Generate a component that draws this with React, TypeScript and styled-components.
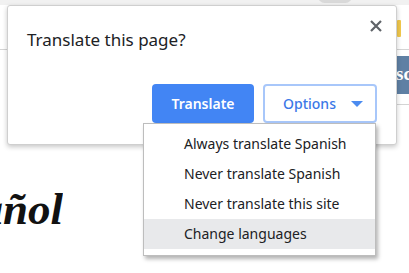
import React from "react";
import styled, { createGlobalStyle } from "styled-components";

const GlobalStyle = createGlobalStyle`
  html, body {
    margin: 0;
    padding: 0;
    background: #ffffff;
  }
  #root {
    width: 409px;
    height: 273px;
  }
`;

const uiFont = `"Noto Sans", "Open Sans", Arial, sans-serif`;

const menuItems = [
  "Always translate Spanish",
  "Never translate Spanish",
  "Never translate this site",
  "Change languages",
];

const App: React.FC = () => {
  return (
    <>
      <GlobalStyle />
      <Page>
        <TopStrip>
          <Pill />
        </TopStrip>
        <HeaderRow>
          <YellowTab />
        </HeaderRow>
        <NavRow>
          <NavTab>
            <NavButton>sc</NavButton>
          </NavTab>
        </NavRow>
        <HeadingClip>
          <Heading>Español</Heading>
        </HeadingClip>

        <Bubble>
          <CloseButton aria-label="Close">
            <svg width="12" height="12" viewBox="0 0 12 12">
              <path
                d="M1 1 L11 11 M11 1 L1 11"
                stroke="#5f6368"
                strokeWidth="2.2"
                strokeLinecap="butt"
              />
            </svg>
          </CloseButton>
          <Title>Translate this page?</Title>
          <ButtonRow>
            <PrimaryButton>Translate</PrimaryButton>
            <OptionsButton>
              Options
              <Caret />
            </OptionsButton>
          </ButtonRow>
        </Bubble>

        <Menu>
          {menuItems.map((label, i) => (
            <MenuItem key={label} $active={i === menuItems.length - 1}>
              {label}
            </MenuItem>
          ))}
        </Menu>
      </Page>
    </>
  );
};

const Page = styled.div`
  position: relative;
  width: 409px;
  height: 273px;
  overflow: hidden;
  background: #ffffff;
  display: flex;
  flex-direction: column;
  font-family: ${uiFont};
`;

const TopStrip = styled.div`
  height: 5px;
  background: #f1f1f1;
  display: flex;
  flex-shrink: 0;
`;

const Pill = styled.div`
  margin-left: 318px;
  margin-top: -10px;
  width: 34px;
  height: 13px;
  border-radius: 7px;
  background: #d9d9d9;
`;

const HeaderRow = styled.div`
  height: 45px;
  flex-shrink: 0;
  border-bottom: 1px solid #d4d4d4;
  display: flex;
  justify-content: flex-end;
  padding-right: 8px;
  padding-top: 15px;
  box-sizing: border-box;
`;

const YellowTab = styled.div`
  width: 4px;
  height: 17px;
  background: #f2c94c;
  border-radius: 1px;
`;

const NavRow = styled.div`
  height: 55px;
  flex-shrink: 0;
  display: flex;
  justify-content: flex-end;
`;

const NavTab = styled.div`
  width: 20px;
  border-bottom: 1px solid #d4d4d4;
  display: flex;
  justify-content: flex-end;
  padding-top: 6px;
  box-sizing: border-box;
`;

const NavButton = styled.div`
  width: 14px;
  height: 38px;
  background: #5f80a4;
  color: #ffffff;
  font-family: "Liberation Serif", serif;
  font-weight: bold;
  font-size: 19px;
  line-height: 36px;
  padding-left: 1px;
  box-sizing: border-box;
  overflow: hidden;
  white-space: nowrap;
`;

const HeadingClip = styled.div`
  margin-top: 79px;
  width: 63px;
  overflow: hidden;
  display: flex;
  justify-content: flex-end;
`;

const Heading = styled.h1`
  margin: 0;
  font-family: "Liberation Serif", "Times New Roman", serif;
  font-style: italic;
  font-weight: bold;
  font-size: 45px;
  line-height: 50px;
  color: #111111;
  white-space: nowrap;
  flex-shrink: 0;
`;

const Bubble = styled.div`
  position: absolute;
  left: 7px;
  top: 5px;
  width: 390px;
  height: 140px;
  box-sizing: border-box;
  background: #ffffff;
  border: 1px solid #cfcfcf;
  border-radius: 3px;
  box-shadow: 0 2px 5px rgba(0, 0, 0, 0.22);
  padding: 22px 19px 0 19px;
  display: flex;
  flex-direction: column;
`;

const CloseButton = styled.button`
  position: absolute;
  top: 14px;
  right: 14px;
  width: 12px;
  height: 12px;
  padding: 0;
  border: none;
  background: none;
  display: flex;
`;

const Title = styled.div`
  font-size: 17px;
  line-height: 24px;
  color: #202124;
`;

const ButtonRow = styled.div`
  margin-top: 32px;
  display: flex;
  justify-content: flex-end;
  gap: 9px;
`;

const PrimaryButton = styled.button`
  width: 102px;
  height: 39px;
  border: none;
  border-radius: 4px;
  background: #4285f4;
  color: #ffffff;
  font-family: ${uiFont};
  font-weight: 600;
  font-size: 14px;
  padding: 0;
`;

const OptionsButton = styled.button`
  width: 114px;
  height: 39px;
  box-sizing: border-box;
  border: 2px solid #a8c7fa;
  border-radius: 4px;
  background: #ffffff;
  color: #3b78e7;
  font-family: ${uiFont};
  font-weight: 500;
  font-size: 14px;
  padding: 0 12px 0 18px;
  display: flex;
  align-items: center;
  justify-content: space-between;
`;

const Caret = styled.span`
  width: 0;
  height: 0;
  border-left: 6px solid transparent;
  border-right: 6px solid transparent;
  border-top: 6px solid #4b8bf0;
  margin-top: 1px;
`;

const Menu = styled.div`
  position: absolute;
  left: 143px;
  top: 123px;
  width: 233px;
  box-sizing: border-box;
  background: #ffffff;
  border: 1px solid #bdbdbd;
  box-shadow: 2px 3px 4px rgba(0, 0, 0, 0.3);
  padding: 5px 0 6px 0;
  display: flex;
  flex-direction: column;
`;

const MenuItem = styled.div<{ $active?: boolean }>`
  height: 30px;
  line-height: 30px;
  padding-left: 40px;
  font-size: 14px;
  color: #202124;
  background: ${(p) => (p.$active ? "#e8e9eb" : "transparent")};
  white-space: nowrap;
`;

export default App;
